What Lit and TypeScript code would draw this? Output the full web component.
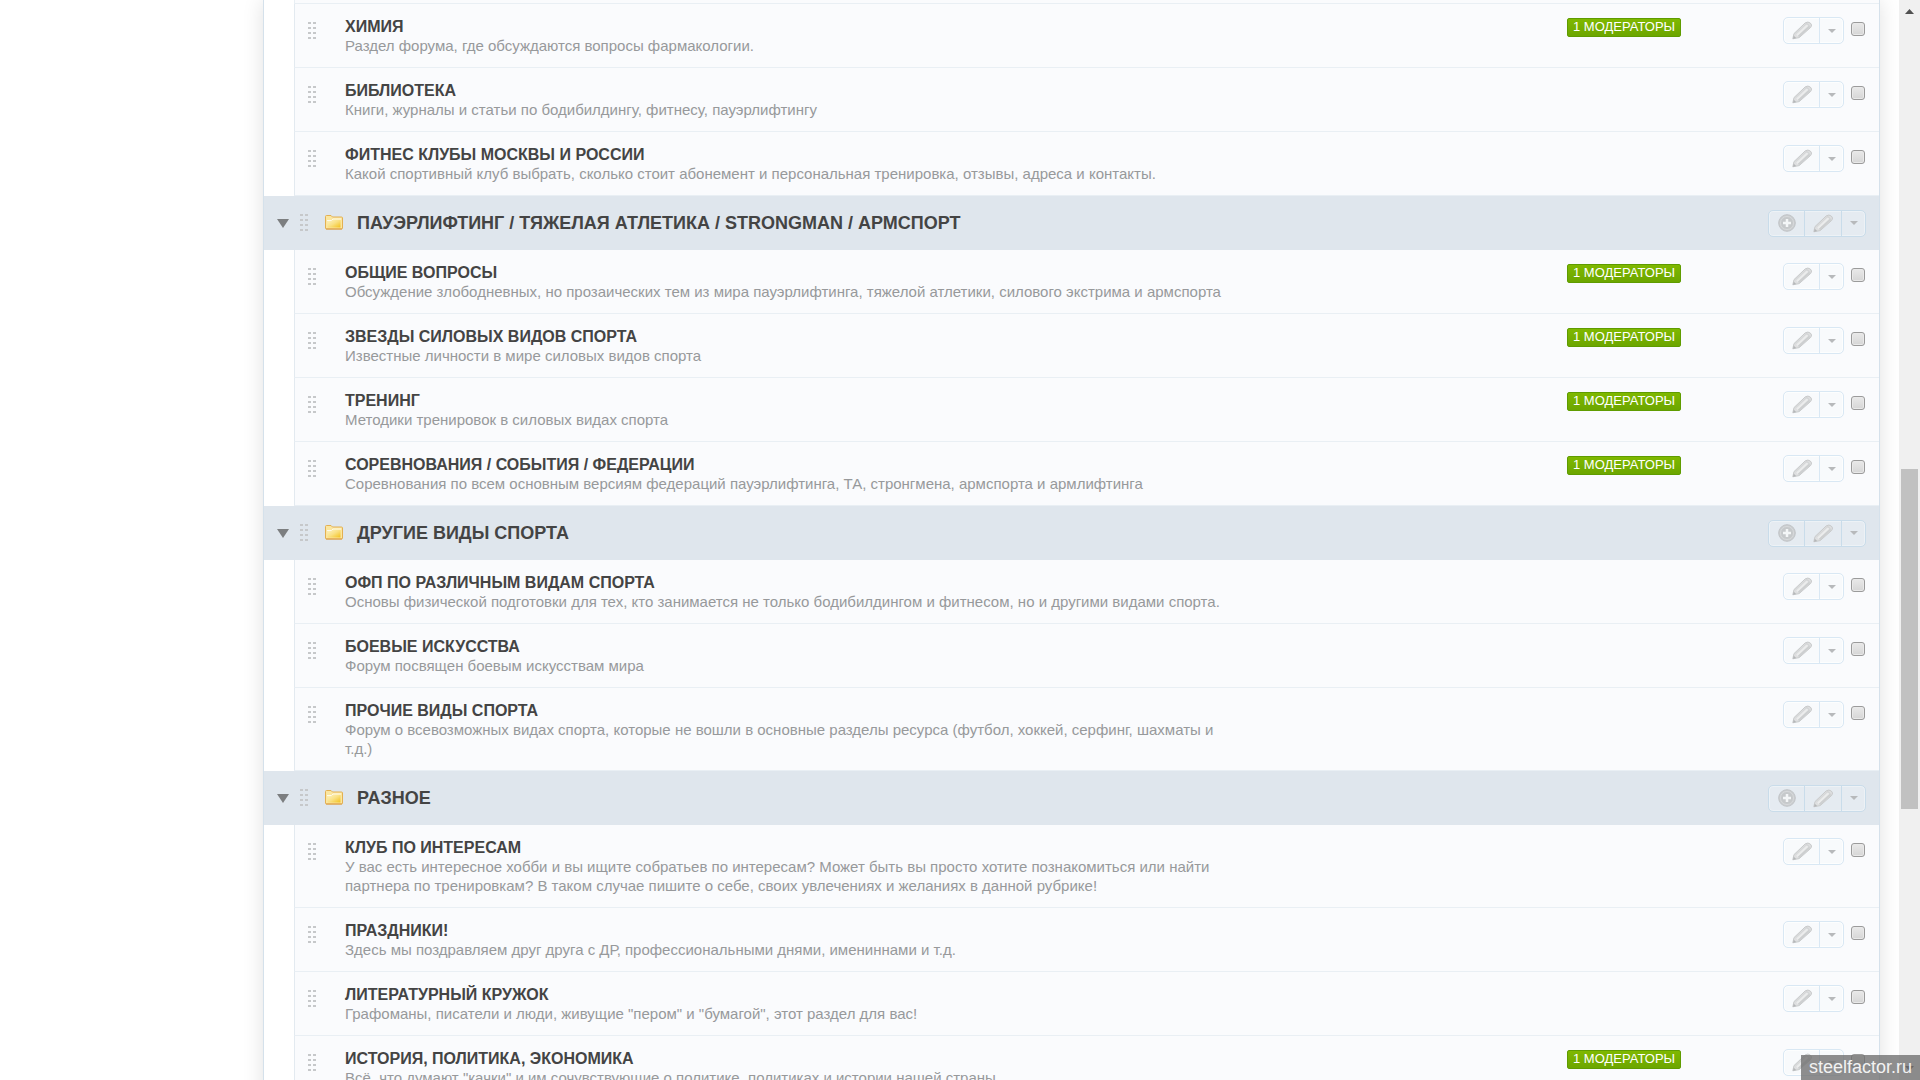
import { LitElement, html, css, svg, nothing } from "lit";
import { customElement, property } from "lit/decorators.js";

interface Forum {
  title: string;
  text: string;
  moderators?: number;
}

interface Category {
  title?: string;
  forums: Forum[];
}

const CATEGORIES: Category[] = [
  {
    forums: [
      { title: "ХИМИЯ", text: "Раздел форума, где обсуждаются вопросы фармакологии.", moderators: 1 },
      { title: "БИБЛИОТЕКА", text: "Книги, журналы и статьи по бодибилдингу, фитнесу, пауэрлифтингу" },
      { title: "ФИТНЕС КЛУБЫ МОСКВЫ И РОССИИ", text: "Какой спортивный клуб выбрать, сколько стоит абонемент и персональная тренировка, отзывы, адреса и контакты." },
    ],
  },
  {
    title: "ПАУЭРЛИФТИНГ / ТЯЖЕЛАЯ АТЛЕТИКА / STRONGMAN / АРМСПОРТ",
    forums: [
      { title: "ОБЩИЕ ВОПРОСЫ", text: "Обсуждение злободневных, но прозаических тем из мира пауэрлифтинга, тяжелой атлетики, силового экстрима и армспорта", moderators: 1 },
      { title: "ЗВЕЗДЫ СИЛОВЫХ ВИДОВ СПОРТА", text: "Известные личности в мире силовых видов спорта", moderators: 1 },
      { title: "ТРЕНИНГ", text: "Методики тренировок в силовых видах спорта", moderators: 1 },
      { title: "СОРЕВНОВАНИЯ / СОБЫТИЯ / ФЕДЕРАЦИИ", text: "Соревнования по всем основным версиям федераций пауэрлифтинга, ТА, стронгмена, армспорта и армлифтинга", moderators: 1 },
    ],
  },
  {
    title: "ДРУГИЕ ВИДЫ СПОРТА",
    forums: [
      { title: "ОФП ПО РАЗЛИЧНЫМ ВИДАМ СПОРТА", text: "Основы физической подготовки для тех, кто занимается не только бодибилдингом и фитнесом, но и другими видами спорта." },
      { title: "БОЕВЫЕ ИСКУССТВА", text: "Форум посвящен боевым искусствам мира" },
      { title: "ПРОЧИЕ ВИДЫ СПОРТА", text: "Форум о всевозможных видах спорта, которые не вошли в основные разделы ресурса (футбол, хоккей, серфинг, шахматы и т.д.)" },
    ],
  },
  {
    title: "РАЗНОЕ",
    forums: [
      { title: "КЛУБ ПО ИНТЕРЕСАМ", text: "У вас есть интересное хобби и вы ищите собратьев по интересам? Может быть вы просто хотите познакомиться или найти партнера по тренировкам? В таком случае пишите о себе, своих увлечениях и желаниях в данной рубрике!" },
      { title: "ПРАЗДНИКИ!", text: "Здесь мы поздравляем друг друга с ДР, профессиональными днями, имениннами и т.д." },
      { title: "ЛИТЕРАТУРНЫЙ КРУЖОК", text: "Графоманы, писатели и люди, живущие \"пером\" и \"бумагой\", этот раздел для вас!" },
      { title: "ИСТОРИЯ, ПОЛИТИКА, ЭКОНОМИКА", text: "Всё, что думают \"качки\" и им сочувствующие о политике, политиках и истории нашей страны.", moderators: 1 },
    ],
  },
];

const grip = html`<svg class="grip" width="8" height="18" viewBox="0 0 8 18" aria-hidden="true">
  ${[0, 5, 10, 15].map((y) => svg`<path d="M0 ${y}h3v2h-3zM5 ${y}h3v2h-3z" fill="#c6c8ca" />`)}
</svg>`;

const folder = html`<svg class="folder" width="18" height="15" viewBox="0 0 18 15" aria-hidden="true">
  <defs>
    <linearGradient id="front" x1="0" y1="0" x2="1" y2="1">
      <stop offset="0" stop-color="#fdf3c4" />
      <stop offset="0.5" stop-color="#fae184" />
      <stop offset="1" stop-color="#f3c21c" />
    </linearGradient>
  </defs>
  <path d="M.5 13V1.500a1 1 0 0 1 1-1H6l1.500 1.500h9a1 1 0 0 1 1 1v10a1 1 0 0 1-1 1h-15a1 1 0 0 1-1-1z" fill="#fbe6a0" stroke="#e3b052" />
  <path d="M2.500 12.500V6H7l1.500-1.500h7v8z" fill="url(#front)" />
  <path d="M2 5.500h4.500L8 4h8" fill="none" stroke="#fffbe8" />
  <path d="M1 14h16" stroke="#dd9d48" />
</svg>`;

const pencil = html`<svg width="20" height="19" viewBox="0 0 20 19" aria-hidden="true">
  <path d="M.8 17.800 2 12.600 13.300 1.800Q16 .2 18.300 2t.5 4.300L7.200 16.600z" fill="#dedfe0" stroke="#c8cacb" stroke-linejoin="round" />
  <path d="M5 14.200 15.500 4.300" stroke="#ebecec" stroke-width="2" />
  <path d="m6.600 15.600 10.600-9.800" stroke="#cdcfd0" stroke-width="2" />
  <path d="m3.500 12.800 10.300-9.600" stroke="#d4d6d7" />
  <path d="M13.800 2.800q3-.4 3.800 3.600" fill="none" stroke="#cfd1d2" />
  <path d="m1 17.800.7-3 2.500 2.200z" fill="#b4b6b8" />
</svg>`;

const plus = html`<svg width="18" height="18" viewBox="0 0 18 18" aria-hidden="true">
  <circle cx="9" cy="9" r="8.300" fill="#cbced0" stroke="#c1c4c7" />
  <circle cx="9" cy="9" r="6.500" fill="#c6c9cb" stroke="#d8dadc" />
  <path d="M9 5v8M5 9h8" stroke="#f4f6f7" stroke-width="2.500" />
</svg>`;

const caret = html`<svg width="8" height="4" viewBox="0 0 8 4" aria-hidden="true"><path d="M0 0h8L4 4z" fill="#b7b9bb" /></svg>`;

const base = css`
  * {
    box-sizing: border-box;
  }
  svg {
    display: block;
    flex: none;
  }
  .tools {
    display: flex;
    height: 27px;
    flex: none;
    border: 1px solid #d9e8f4;
    border-radius: 5px;
    overflow: hidden;
    background: #f8fafc;
    box-shadow: inset 0 0 0 1px #fdfefe;
  }
  .tool {
    display: flex;
    align-items: center;
    justify-content: center;
    width: 35px;
    margin: 0;
    padding: 0;
    border: 0;
    background: none;
    cursor: pointer;
  }
  .tool + .tool {
    width: 37px;
    border-left: 1px solid #d9e8f4;
  }
  .tool + .menu {
    width: 24px;
  }
`;

@customElement("forum-row")
class ForumRow extends LitElement {
  @property({ attribute: false }) forum!: Forum;

  static styles = [
    base,
    css`
      :host {
        display: block;
      }
      .row {
        display: flex;
        align-items: flex-start;
        min-height: 64px;
        padding: 13px 14px 12px 13px;
        border-bottom: 1px solid #e9eff4;
        border-left: 1px solid #e3eaf0;
        background: #fafbfd;
      }
      .grip {
        margin: 5px 29px 0 0;
      }
      .main {
        flex: 1 1 0;
        min-width: 0;
      }
      .title {
        margin: 0;
        font-size: 16px;
        line-height: 19px;
        font-weight: bold;
      }
      .title a {
        color: #444;
        text-decoration: none;
      }
      .text {
        max-width: 884px;
        margin: 0;
        color: #97999b;
        font-size: 15px;
        line-height: 19px;
      }
      .side {
        display: flex;
        align-items: flex-start;
        width: 298px;
        flex: none;
      }
      .badge {
        height: 19px;
        margin-top: 1px;
        padding: 0 5px;
        border: 1px solid #5f9c00;
        border-radius: 2px;
        background: linear-gradient(#7fb800, #6ca600);
        color: #fff;
        font-size: 13px;
        line-height: 16px;
        text-decoration: none;
        white-space: nowrap;
      }
      .tools {
        margin-left: auto;
      }
      .pick {
        appearance: none;
        width: 14px;
        height: 14px;
        margin: 5px 0 0 7px;
        flex: none;
        border: 1px solid #9b9b9b;
        border-radius: 3px;
        background: linear-gradient(#e9e9e9, #d6d6d6);
        box-shadow: inset 0 0 0 1px #e9e9e9;
      }
    `,
  ];

  render() {
    const f = this.forum;
    return html`<div class="row">
      ${grip}
      <div class="main">
        <h3 class="title"><a href="#">${f.title}</a></h3>
        <p class="text">${f.text}</p>
      </div>
      <div class="side">
        ${f.moderators ? html`<a class="badge" href="#">${f.moderators} МОДЕРАТОРЫ</a>` : nothing}
        <div class="tools">
          <button class="tool" aria-label="Изменить">${pencil}</button>
          <button class="tool menu" aria-label="Меню">${caret}</button>
        </div>
        <input class="pick" type="checkbox" aria-label=${f.title} />
      </div>
    </div>`;
  }
}

@customElement("forum-category")
class ForumCategory extends LitElement {
  @property({ attribute: false }) category!: Category;

  static styles = [
    base,
    css`
      :host {
        display: block;
      }
      .head {
        display: flex;
        align-items: center;
        height: 54px;
        padding: 0 13px;
        background: #dfe6ed;
      }
      .toggle {
        margin: 0 11px 0 0;
        padding: 0;
        border: 0;
        background: none;
      }
      .folder {
        margin: 0 14px 2px 17px;
      }
      .name {
        flex: 1;
        margin: 0;
        color: #444;
        font-size: 18px;
        line-height: 20px;
        padding-bottom: 1px;
        font-weight: bold;
      }
      .head .tools {
        border-color: #c9dcea;
        background: #e5ebf1;
        box-shadow: inset 0 0 0 1px #edf2f6;
      }
      .head .tool + .tool {
        border-color: #c9dcea;
      }
      .list {
        padding-left: 30px;
      }
    `,
  ];

  render() {
    const c = this.category;
    return html`
      ${c.title
        ? html`<header class="head">
            <button class="toggle" aria-label="Свернуть">
              <svg width="12" height="9" viewBox="0 0 12 9"><path d="M0 0h12L6 9z" fill="#7c7e80" /></svg>
            </button>
            ${grip} ${folder}
            <h2 class="name">${c.title}</h2>
            <div class="tools">
              <button class="tool" aria-label="Добавить">${plus}</button>
              <button class="tool" aria-label="Изменить">${pencil}</button>
              <button class="tool menu" aria-label="Меню">${caret}</button>
            </div>
          </header>`
        : nothing}
      <div class="list">${c.forums.map((f) => html`<forum-row .forum=${f}></forum-row>`)}</div>
    `;
  }
}

@customElement("app-root")
class AppRoot extends LitElement {
  static styles = css`
    * {
      box-sizing: border-box;
    }
    :host {
      display: flex;
      position: relative;
      height: 100vh;
      overflow: hidden;
      background: #fff;
      font-family: "Liberation Sans", Arial, sans-serif;
    }
    .page {
      flex: 1;
      min-width: 0;
      padding: 0 19px 0 263px;
      overflow: hidden;
    }
    .board {
      border: 1px solid #d5e1eb;
      border-width: 0 1px;
      background: #fff;
      box-shadow: 0 0 20px rgba(0, 0, 0, 0.12);
    }
    .above {
      height: 4px;
      margin-left: 30px;
      border: 1px solid #e9eff4;
      border-width: 0 0 1px 1px;
      background: #fafbfd;
    }
    .bar {
      display: flex;
      flex-direction: column;
      align-items: center;
      width: 21px;
      flex: none;
      padding: 9px 0;
      background: #f0f0f0;
    }
    .thumb {
      width: 17px;
      height: 32%;
      margin: 455px 0 auto;
      background: #c1c1c1;
    }
    .mark {
      position: absolute;
      right: 0;
      bottom: 0;
      padding: 0 8px;
      background: rgba(110, 110, 110, 0.78);
      color: #f2f2f2;
      font-size: 18px;
      line-height: 25px;
    }
  `;

  render() {
    return html`
      <main class="page">
        <div class="board">
          <div class="above"></div>
          ${CATEGORIES.map((c) => html`<forum-category .category=${c}></forum-category>`)}
        </div>
      </main>
      <div class="bar" aria-hidden="true">
        <svg width="9" height="5" viewBox="0 0 9 5"><path d="M0 5h9L4.500 0z" fill="#505050" /></svg>
        <div class="thumb"></div>
        <svg width="9" height="5" viewBox="0 0 9 5"><path d="M0 0h9L4.500 5z" fill="#505050" /></svg>
      </div>
      <div class="mark">steelfactor.ru</div>
    `;
  }
}
